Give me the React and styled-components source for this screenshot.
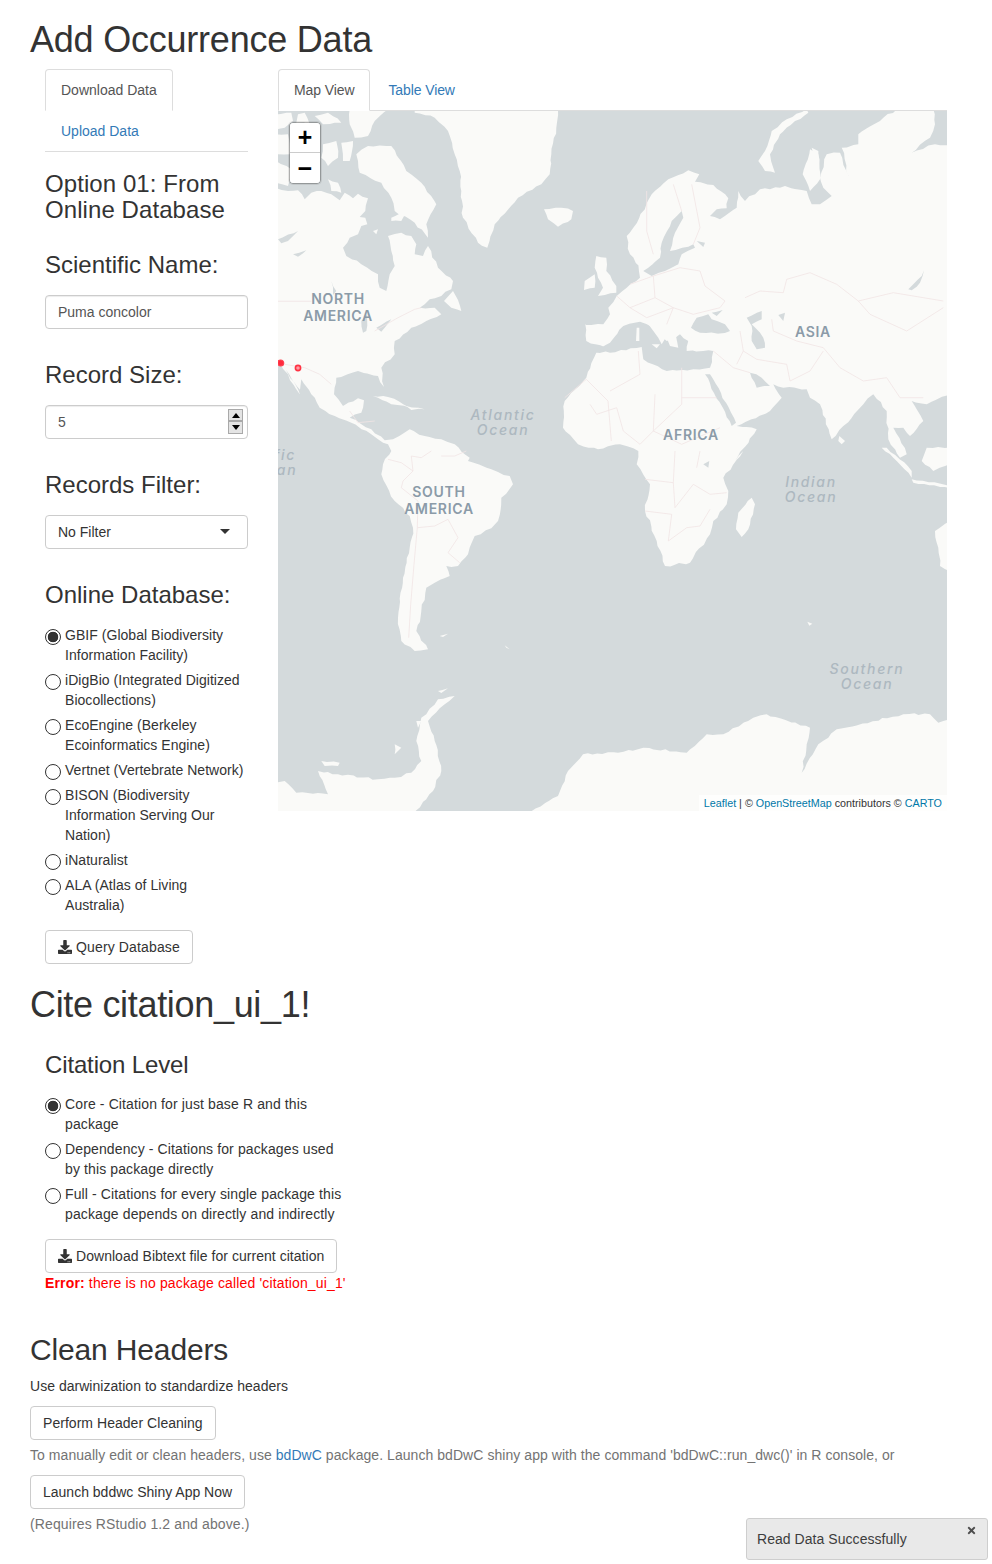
import React from 'react'
import styled, { createGlobalStyle } from 'styled-components'
import { FaDownload, FaTimes } from 'react-icons/fa'

const GlobalStyle = createGlobalStyle`
 html, body {
  margin: 0;
  padding: 0;
  background: #fff;
 }
 body {
  font-family: "Liberation Sans", Arial, sans-serif;
  font-size: 14px;
  line-height: 20px;
  color: #333;
 }
 * {
  box-sizing: border-box;
 }
`

const Page = styled.div`
 width: 992px;
 min-height: 1564px;
 padding: 0 30px;
`

const Title = styled.h1`
 margin: ${(p) => p.$top || '20px'} 0 9.4px;
 font-size: 36px;
 font-weight: 500;
 line-height: 39.6px;
 letter-spacing: ${(p) => p.$tracking || '-0.22px'};
`

const Row = styled.div`
 display: grid;
 grid-template-columns: 233px 699px;
`

const Column = styled.div`
 padding: 0 15px;
 min-width: 0;
`

const NavTabs = styled.ul`
 display: flex;
 flex-wrap: wrap;
 list-style: none;
 margin: 0;
 padding: 0;
 border-bottom: 1px solid #ddd;
 letter-spacing: ${(p) => p.$tracking || '0'};
`

const Tab = styled.li`
 margin: 0 2px -1px 0;
 padding: 10px 15px;
 border: 1px solid ${(p) => (p.$active ? '#ddd' : 'transparent')};
 border-bottom-color: ${(p) => (p.$active ? '#fff' : 'transparent')};
 border-radius: 4px 4px 0 0;
 background: ${(p) => (p.$active ? '#fff' : 'transparent')};
 color: ${(p) => (p.$active ? '#555' : '#337ab7')};
`

const OptionTitle = styled.h3`
 margin: 18.6px 0 28.2px;
 font-size: 24px;
 font-weight: 500;
 line-height: 26.4px;
 letter-spacing: 0.08px;
`

const FieldTitle = styled.h3`
 margin: 0 0 17px;
 font-size: 24px;
 font-weight: 500;
 line-height: 26.4px;
`

const Field = styled.div`
 position: relative;
 height: 34px;
 margin-bottom: 32.6px;
`

const TextInput = styled.input`
 display: block;
 width: 100%;
 height: 34px;
 padding: 6px 12px;
 border: 1px solid #ccc;
 border-radius: 4px;
 font: inherit;
 color: #555;
 background: #fff;
 box-shadow: inset 0 1px 1px rgba(0, 0, 0, 0.075);
 outline: none;
`

const Spinner = styled.div`
 position: absolute;
 top: 4px;
 right: 5px;
 width: 15px;
 height: 25px;
 display: flex;
 flex-direction: column;
`

const SpinButton = styled.span`
 flex: 1;
 display: flex;
 align-items: center;
 justify-content: center;
 background: #e4e4e4;
 border: 1px solid #a9a9a9;
 &::after {
  content: '';
  border-left: 4px solid transparent;
  border-right: 4px solid transparent;
  border-${(p) => (p.$up ? 'bottom' : 'top')}: 5px solid #000;
 }
`

const SelectBox = styled.div`
 height: 34px;
 padding: 6px 17px 6px 12px;
 border: 1px solid #ccc;
 border-radius: 4px;
 display: flex;
 align-items: center;
 justify-content: space-between;
 background: #fff;
`

const Caret = styled.span`
 border-left: 5px solid transparent;
 border-right: 5px solid transparent;
 border-top: 5px solid #333;
`

const RadioList = styled.div`
 display: flex;
 flex-direction: column;
 gap: 5px;
 width: ${(p) => p.$width || 'auto'};
 letter-spacing: ${(p) => p.$tracking || '0'};
`

const RadioRow = styled.label`
 display: flex;
 align-items: flex-start;
 gap: 4px;
`

const RadioInput = styled.input`
 appearance: none;
 flex: none;
 width: 16px;
 height: 16px;
 margin: 4px 0 0;
 border: 1.4px solid #333;
 border-radius: 50%;
 background: #fff;
 &:checked {
  background: radial-gradient(circle, #333 0 5px, #fff 5.6px);
 }
`

const Button = styled.button`
 display: inline-flex;
 align-items: center;
 height: 34px;
 padding: 6px 12px;
 border: 1px solid #ccc;
 border-radius: 4px;
 background: #fff;
 color: #333;
 font: inherit;
 letter-spacing: ${(p) => p.$tracking || '0.04px'};
 white-space: nowrap;
 svg {
  margin-right: 4px;
 }
`

const BlockButton = styled(Button)`
 margin-top: 15px;
 display: flex;
`

const MapFrame = styled.div`
 position: relative;
 height: 700px;
 overflow: hidden;
 background: #d4dadc;
`

const MapDrawing = styled.svg`
 display: block;
 width: 100%;
 height: 100%;
`

const ZoomControl = styled.div`
 position: absolute;
 top: 11px;
 left: 11px;
 width: 32px;
 border: 1px solid rgba(0, 0, 0, 0.3);
 border-radius: 4px;
 box-shadow: 0 0 0 1px rgba(0, 0, 0, 0.08);
`

const ZoomButton = styled.div`
 height: 30px;
 padding-top: 6px;
 display: flex;
 align-items: center;
 justify-content: center;
 background: #fff;
 color: #000;
 font: bold 25px/24px "Liberation Mono", monospace;
 border-bottom: ${(p) => (p.$last ? 'none' : '1px solid #ccc')};
 border-radius: ${(p) => (p.$last ? '0 0 3px 3px' : '3px 3px 0 0')};
`

const Attribution = styled.div`
 position: absolute;
 right: 0;
 bottom: 0;
 height: 16px;
 padding: 0 5px;
 background: rgba(255, 255, 255, 0.7);
 font-size: 10.75px;
 line-height: 16px;
 color: #333;
 white-space: nowrap;
`

const MapLink = styled.span`
 color: #0078a8;
`

const SectionTitle = styled.h3`
 margin: 27px 0 16px;
 font-size: 24px;
 font-weight: 500;
 line-height: 26.4px;
 letter-spacing: -0.14px;
`

const Indented = styled.div`
 padding-left: 15px;
`

const ErrorText = styled.div`
 color: #f00;
 letter-spacing: 0.15px;
 b {
  font-weight: 700;
 }
`

const HeadersTitle = styled.h2`
 margin: 40px 0 10px;
 font-size: 30px;
 font-weight: 500;
 line-height: 33px;
 letter-spacing: -0.15px;
`

const Lead = styled.p`
 margin: 0 0 10px;
 letter-spacing: 0.03px;
`

const HelpText = styled.div`
 margin: 5px 0 10px;
 color: #737373;
 white-space: nowrap;
 letter-spacing: ${(p) => p.$tracking};
`

const HelpLink = styled.span`
 color: #337ab7;
`

const Notification = styled.div`
 position: fixed;
 right: 4px;
 bottom: 4px;
 width: 242px;
 height: 42px;
 padding: 10px;
 border: 1px solid #ccc;
 border-radius: 3px;
 background: #e8e8e8;
 color: #333;
 letter-spacing: 0.05px;
 opacity: 0.95;
`

const CloseIcon = styled.span`
 position: absolute;
 top: 6px;
 right: 10px;
 display: flex;
 font-size: 11px;
 color: #444;
`

// the zoom crops are 3x, so the coast is traced per crop and moved into map pixels
const A = [0, 0]
const B = [332, 0]
const C = [0, 340]
const D = [332, 340]

const pts = (...parts) =>
 parts
  .map(([origin, s]) =>
   s
    .trim()
    .split(/\s+/)
    .map((p) => {
     const [x, y] = p.split(',').map(Number)
     return `${(origin[0] + x / 3).toFixed(1)},${(origin[1] + y / 3).toFixed(1)}`
    })
    .join(' ')
  )
  .join(' ')

// breaks long straight coast segments up so they read like a coastline at this zoom
const roughen = (points) => {
 let seed = 7
 const next = () => {
  seed = (seed * 16807) % 2147483647
  return (seed % 1000) / 1000 - 0.5
 }
 const list = points.split(' ').map((p) => p.split(',').map(Number))
 const out = []
 list.forEach(([x, y], i) => {
  const [nx, ny] = list[(i + 1) % list.length]
  const len = Math.hypot(nx - x, ny - y)
  const steps = Math.max(1, Math.floor(len / 5))
  for (let s = 0; s < steps; s++) {
   const t = s / steps
   const amp = s === 0 ? 0 : 2.2
   out.push(`${(x + (nx - x) * t + next() * amp).toFixed(1)},${(y + (ny - y) * t + next() * amp).toFixed(1)}`)
  }
 })
 return out.join(' ')
}

const land = [
 // north + central america
 pts(
  [A, `-5,232 30,240 60,238 80,265 100,245 130,240 160,250 185,268 200,245 225,262 240,248 270,262 262,300 245,318 262,320 268,340 250,345 240,370 215,380 195,410 205,435 250,460 300,490 305,530 325,540 335,490 350,465 340,420 330,375 370,365 400,375 415,400 410,430 435,435 450,405 480,470 525,510 520,535 490,555 455,565 425,590 470,590 490,610 445,630 400,650 350,690 350,730 310,770 318,828 300,795 240,780 175,800 168,850 195,885 240,862 258,868 250,905 215,920 280,955 320,988 345,985 395,955 440,975 490,985 530,1000 575,1040`],
  [C, `570,30 640,55 695,75 705,100 670,140 660,210 640,232 590,255 570,310 540,345 505,345 515,375 470,395 445,410 430,480 415,540 450,595 410,600 370,570 360,500 375,380 395,290 405,230 395,195 350,150 310,70 315,40 340,0`],
  [A, `330,1000 300,985 280,970 220,935 170,915 125,890 100,850 70,805 65,850 30,790 5,755 -5,745`]
 ),
 // greenland
 pts([A, `410,-5 410,5 470,20 510,60 530,130 545,180 550,240 555,320 600,395 628,410 650,340 720,260 790,220 815,190 820,130 835,50 840,-5`]),
 // canadian arctic
 pts([A, `-5,10 40,5 45,30 20,50 -5,55`]),
 pts([A, `60,10 80,5 95,40 55,35`]),
 pts([A, `110,15 150,5 190,35 135,40`]),
 pts([A, `215,-5 330,-5 290,30 270,75 230,80 215,40`]),
 pts([A, `135,100 175,90 180,140 150,165 130,140`]),
 pts([A, `190,95 225,90 215,150 195,150`]),
 pts([A, `-5,150 40,175 30,225 -5,215`]),
 pts([A, `-5,70 30,70 35,130 -5,130`]),
 pts([A, `270,105 340,105 385,180 430,215 475,280 445,340 450,380 410,335 350,300 340,260 310,215 245,185 235,130`]),
 pts([A, `340,320 385,300 370,330 340,330`]),
 pts([A, `285,360 300,355 295,370`]),
 pts([A, `150,205 180,215 190,245 160,240`]),
 pts([A, `345,240 365,245 360,270 345,265`]),
 // atlantic islands
 pts([A, `798,295 850,290 885,300 880,325 840,347 810,325`]),
 pts([A, `955,435 985,440 985,480 1015,525 1015,545 960,555 975,530 960,500 950,470`]),
 pts([A, `920,510 950,490 950,530 918,537`]),
 pts([A, `498,570 525,540 550,600 520,590`]),
 pts([A, `285,855 330,858 395,890 340,880`]),
 pts([A, `385,885 440,895 400,897`]),
 // eurasia + africa
 pts(
  [B, `-71,642 -20,640 0,610 -5,590 20,555 50,530 90,500 85,460 110,490 60,430 50,375 70,350 125,250 175,205 235,178 268,190 255,212 310,222 355,262 350,292 320,295 300,315 330,325 380,290 385,240 405,270 450,235 510,230 525,225 590,240 605,280 630,280 665,255 640,230 630,200 650,130 690,125 715,195 695,110 745,100 745,70 810,30 860,-5 970,-5 975,40 960,80 905,125 975,100 1025,105 1025,845 950,880 905,870 940,930 900,975 880,950 850,950 890,1030 870,1040 835,985 830,900 790,850 760,880 700,945 665,985 630,880 600,860 590,835 520,830 490,820 515,860 480,900 380,945 440,955 375,1050`],
  [D, `400,0 340,80 355,120 350,160 310,210 300,250 240,335 165,345 140,270 105,180 120,100 80,40 85,0`],
  [B, `30,1000 -36,1015`],
  [A, `900,1000 855,950 860,870 925,800 955,725 1000,715`],
  [A, `925,690 922,640`]
 ),
 pts([D, `378,235 385,185 425,140 435,160 415,235 395,258`]),
 pts([B, `688,975 705,990 695,1000 685,990`]),
 pts([B, `445,150 465,120 485,60 530,25 590,-5 595,5 555,30 510,70 480,130 495,185 465,180`]),
 pts([B, `578,190 600,115 625,130 630,205 600,240`]),
 pts([B, `605,110 625,120 625,170 610,160`]),
 // indonesia + australia
 pts([D, `830,-10 905,60 905,80 850,20 815,-10`]),
 pts([D, `905,85 1020,105 1020,112 910,95`]),
 pts([D, `935,30 970,60 1020,40 1020,-10 950,-10`]),
 pts([D, `975,240 1020,210 1020,360 990,345 985,290`]),
 // small southern islands
 pts([C, `485,555 510,548 495,558`]),
 pts([C, `680,583 695,595 685,590`]),
 pts([D, `592,512 607,518 598,524`]),
 // antarctica
 pts([C, `-5,995 20,990 55,1025 150,1030 120,960 180,970 300,985 350,980 400,965 430,930 415,870 430,800 445,790 480,745 530,735 500,760 450,810 470,870 490,960 465,1020 403,1090 -5,1090`]),
 pts(
  [C, `745,1090 840,1035 870,960 915,910 1020,905`],
  [D, `100,890 230,905 290,850 340,850 430,800 470,790 600,830 590,880 575,965 625,880 680,835 880,790 960,790 985,815 1020,805 1020,1090`]
 ),
 pts([C, `130,930 185,935 180,945 140,945`]),
 pts([C, `350,880 370,890 350,910`]),
 pts([C, `415,810 430,810 420,830`]),
 pts([C, `480,720 510,712 490,726`])
].map(roughen)

const water = [
 // hudson inlets, lakes
 pts([A, `0,385 60,360 30,390 10,397`]),
 pts([A, `45,430 85,418 60,437`]),
 pts([A, `160,510 175,540 165,552`]),
 pts([A, `250,630 268,610 265,660 255,665`]),
 pts([A, `295,650 340,625 310,662`]),
 pts([A, `30,788 72,852 66,850 24,776`]),
 // mediterranean
 pts([B, `-45,722 0,695 40,645 90,632 130,650 170,690 210,670 235,690 230,720 310,720 300,770 250,775 170,780 100,745 95,708 0,725`]),
 // black sea, azov, caspian, aral
 pts([B, `243,650 260,620 295,610 305,625 345,640 360,660 340,668 270,665`]),
 pts([B, `305,605 338,597 320,615`]),
 pts([B, `410,620 455,600 455,625 425,640 460,680 465,710 440,715 425,690 425,645`]),
 pts([B, `505,612 525,605 520,630`]),
 // baltic and lakes
 pts([B, `155,395 185,330 215,300 220,320 195,365 180,420 250,400 255,410 215,430 205,460 165,480 125,495 100,480 115,470 150,440`]),
 pts([B, `260,390 285,395 280,408`]),
 // red sea, gulf
 pts([B, `285,790 300,790 378,935 365,945`]),
 pts([B, `420,785 440,830 480,825 455,800`]),
 // baikal, victoria
 pts([B, `895,535 935,495 942,478 930,515 905,538`]),
 pts([D, `280,40 298,30 295,50`])
].map(roughen)

const islandsOverWater = [
 pts([B, `108,615 125,612 170,675 155,700 145,680 112,635`]),
 pts([B, `80,650 88,650 88,690 78,690`]),
 pts([B, `125,700 150,700 140,712`]),
 pts([B, `195,660 205,710 180,705 170,680`]),
 pts([B, `235,680 350,665 390,690 380,710 310,715 235,715`])
]

const borders = [
 // canada/us, us/mexico
 pts([A, `0,571 100,571`]),
 pts([A, `290,660 360,620 410,595 430,590`]),
 pts([A, `20,760 80,770 125,790 160,820`]),
 // central + south america
 pts([A, `215,900 240,935 290,930`]),
 pts([C, `330,25 370,35 405,60 375,90 370,110 420,150 418,230 408,340 398,460 392,560`]),
 pts([C, `405,60 400,15 430,20 460,0`]),
 pts([C, `418,230 470,225 510,205 540,260 510,305 545,335`]),
 pts([C, `490,15 530,15 565,0`]),
 // europe
 pts([B, `60,520 130,495 135,560 60,590 20,555`]),
 pts([B, `130,495 210,470 270,480 285,525 345,570 330,590 250,610 190,590 135,560`]),
 pts([B, `60,590 110,620 190,590 170,640`]),
 pts([B, `110,240 110,360 130,430`]),
 pts([B, `190,220 215,300`]),
 pts([B, `245,220 270,350 250,400`]),
 // asia
 pts([B, `405,560 450,540 520,545 530,505 600,485 680,520 745,570 780,610 890,660 1000,590`]),
 pts([B, `745,570 850,545 1000,570`]),
 pts([B, `485,625 490,660 560,690 640,710 690,770 760,810 830,800 870,860 940,860`]),
 pts([B, `390,660 400,720 440,745 530,760 540,810 600,780 640,720`]),
 pts([B, `310,720 370,770 420,785`]),
 pts([B, `400,720 380,760`]),
 // africa
 pts([A, `860,860 925,805 990,870 1000,990`]),
 pts([B, `0,840 90,790 85,720`]),
 pts([B, `-60,880 -40,910 20,890 40,960 90,1000 130,960 215,880 215,770`]),
 pts([B, `215,860 320,860`]),
 pts([B, `135,850 130,960 215,1000 330,950`]),
 pts([D, `105,85 190,95 195,170 250,100 300,130 350,125`]),
 pts([D, `105,180 185,190 175,270 230,230 270,225 300,175`]),
 pts([D, `190,95 195,0`]),
 pts([D, `260,50 270,0`])
]

const labels = [
 { x: 60, y: 193, t: 'NORTH' },
 { x: 60, y: 210, t: 'AMERICA' },
 { x: 161, y: 386, t: 'SOUTH' },
 { x: 161, y: 403, t: 'AMERICA' },
 { x: 413, y: 329, t: 'AFRICA' },
 { x: 535, y: 226, t: 'ASIA' }
]

const oceans = [
 { x: 225, y: 309, t: 'Atlantic' },
 { x: 225, y: 324, t: 'Ocean' },
 { x: 533, y: 376, t: 'Indian' },
 { x: 533, y: 391, t: 'Ocean' },
 { x: 589, y: 563, t: 'Southern' },
 { x: 589, y: 578, t: 'Ocean' },
 { x: -11, y: 349, t: 'Pacific' },
 { x: -7, y: 364, t: 'Ocean' }
]

const WorldMap = () => (
 <MapDrawing viewBox="0 0 669 700">
  <rect width="669" height="700" fill="#d4dadc" />
  {land.map((p, i) => (
   <polygon key={i} points={p} fill="#fafaf8" />
  ))}
  {water.map((p, i) => (
   <polygon key={i} points={p} fill="#d4dadc" />
  ))}
  {islandsOverWater.map((p, i) => (
   <polygon key={i} points={p} fill="#fafaf8" />
  ))}
  {borders.map((p, i) => (
   <polyline key={i} points={p} fill="none" stroke="#f1e4e4" strokeWidth="0.8" />
  ))}
  {labels.map((l, i) => (
   <text key={i} x={l.x} y={l.y} textAnchor="middle" fontFamily="Inter, sans-serif" fontSize="14" fontWeight="600" letterSpacing="0.7" fill="#8b9ba8">
    {l.t}
   </text>
  ))}
  {oceans.map((l, i) => (
   <text key={i} x={l.x} y={l.y} textAnchor="middle" fontFamily="Inter, sans-serif" fontSize="14" fontWeight="500" fontStyle="italic" letterSpacing="1.7" fill="#adb8c0">
    {l.t}
   </text>
  ))}
  <circle cx="2.7" cy="252" r="3" fill="#ff2a3c" stroke="#ff4050" strokeWidth="1.2" />
  <circle cx="20" cy="257" r="2.6" fill="#ff9aa2" stroke="#ff3344" strokeWidth="1.6" />
 </MapDrawing>
)

const databases = [
 ['GBIF (Global Biodiversity Information Facility)', true],
 ['iDigBio (Integrated Digitized Biocollections)'],
 ['EcoEngine (Berkeley Ecoinformatics Engine)'],
 ['Vertnet (Vertebrate Network)'],
 ['BISON (Biodiversity Information Serving Our Nation)'],
 ['iNaturalist'],
 ['ALA (Atlas of Living Australia)']
]

const citationLevels = [
 ['Core - Citation for just base R and this package', true],
 ['Dependency - Citations for packages used by this package directly'],
 ['Full - Citations for every single package this package depends on directly and indirectly']
]

const App = () => (
 <Page>
  <GlobalStyle />
  <Title>Add Occurrence Data</Title>
  <Row>
   <Column>
    <NavTabs>
     <Tab $active>Download Data</Tab>
     <Tab>Upload Data</Tab>
    </NavTabs>
    <OptionTitle>Option 01: From Online Database</OptionTitle>
    <FieldTitle>Scientific Name:</FieldTitle>
    <Field>
     <TextInput defaultValue="Puma concolor" />
    </Field>
    <FieldTitle>Record Size:</FieldTitle>
    <Field>
     <TextInput defaultValue="5" />
     <Spinner>
      <SpinButton $up />
      <SpinButton />
     </Spinner>
    </Field>
    <FieldTitle>Records Filter:</FieldTitle>
    <Field>
     <SelectBox>
      No Filter
      <Caret />
     </SelectBox>
    </Field>
    <FieldTitle>Online Database:</FieldTitle>
    <RadioList $tracking="0.04px">
     {databases.map(([label, checked]) => (
      <RadioRow key={label}>
       <RadioInput type="radio" name="db" defaultChecked={checked} />
       <span>{label}</span>
      </RadioRow>
     ))}
    </RadioList>
    <BlockButton $tracking="0.14px">
     <FaDownload size={14} />
     Query Database
    </BlockButton>
   </Column>
   <Column>
    <NavTabs $tracking="-0.1px">
     <Tab $active>Map View</Tab>
     <Tab>Table View</Tab>
    </NavTabs>
    <MapFrame>
     <WorldMap />
     <ZoomControl>
      <ZoomButton>+</ZoomButton>
      <ZoomButton $last>−</ZoomButton>
     </ZoomControl>
     <Attribution>
      <MapLink>Leaflet</MapLink> | © <MapLink>OpenStreetMap</MapLink> contributors © <MapLink>CARTO</MapLink>
     </Attribution>
    </MapFrame>
   </Column>
  </Row>
  <Title $top="21px" $tracking="-0.32px">Cite citation_ui_1!</Title>
  <Indented>
   <SectionTitle>Citation Level</SectionTitle>
   <RadioList $width="300px" $tracking="0.12px">
    {citationLevels.map(([label, checked]) => (
     <RadioRow key={label}>
      <RadioInput type="radio" name="level" defaultChecked={checked} />
      <span>{label}</span>
     </RadioRow>
    ))}
   </RadioList>
   <BlockButton>
    <FaDownload size={14} />
    Download Bibtext file for current citation
   </BlockButton>
   <ErrorText>
    <b>Error:</b> there is no package called 'citation_ui_1'
   </ErrorText>
  </Indented>
  <HeadersTitle>Clean Headers</HeadersTitle>
  <Lead>Use darwinization to standardize headers</Lead>
  <Button>Perform Header Cleaning</Button>
  <HelpText $tracking="0.055px">
   To manually edit or clean headers, use <HelpLink>bdDwC</HelpLink> package. Launch bdDwC shiny app with the command 'bdDwC::run_dwc()' in R console, or
  </HelpText>
  <Button $tracking="0">Launch bddwc Shiny App Now</Button>
  <HelpText $tracking="0.12px">(Requires RStudio 1.2 and above.)</HelpText>
  <Notification>
   Read Data Successfully
   <CloseIcon>
    <FaTimes />
   </CloseIcon>
  </Notification>
 </Page>
)

export default App
